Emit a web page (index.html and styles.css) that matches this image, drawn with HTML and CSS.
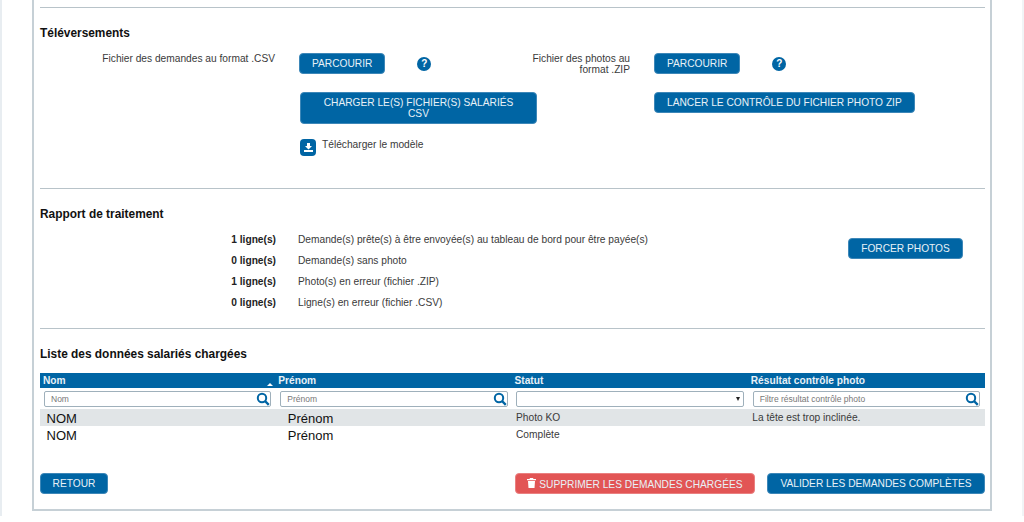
FILE: index.html
```html
<!doctype html>
<html lang="fr">
  <head>
    <meta charset="UTF-8" />
    <meta name="viewport" content="width=device-width, initial-scale=1.0" />
    <title>Téléversements</title>
    <link rel="stylesheet" href="styles.css">
  </head>
  <body>
    <div class="page">
      <div class="card">
        <hr class="sep" />

        <h2 class="upload-title">Téléversements</h2>
        <div class="upload">
          <div class="label">Fichier des demandes au format .CSV</div>
          <div class="browse">
            <button class="btn">Parcourir</button>
            <span class="help">?</span>
          </div>
          <div class="label">Fichier des photos au format .ZIP</div>
          <div class="browse">
            <button class="btn">Parcourir</button>
            <span class="help">?</span>
          </div>

          <div></div>
          <div><button class="btn wide">Charger le(s) fichier(s) salariés CSV</button></div>
          <div></div>
          <div><button class="btn">Lancer le contrôle du fichier photo ZIP</button></div>

          <div></div>
          <div class="model">
            <span class="model-icon">
              <svg width="11" height="11" viewBox="0 0 11 11"><path d="M4 1h3v3h2L5.5 7.5 2 4h2zM1 8h9v2H1z" fill="#fff"/></svg>
            </span>
            <span>Télécharger le modèle</span>
          </div>
        </div>

        <hr class="sep" />

        <h2 class="report-title">Rapport de traitement</h2>
        <div class="report">
          <ul class="report-list">
            <li><b>1 ligne(s)</b><span>Demande(s) prête(s) à être envoyée(s) au tableau de bord pour être payée(s)</span></li>
            <li><b>0 ligne(s)</b><span>Demande(s) sans photo</span></li>
            <li><b>1 ligne(s)</b><span>Photo(s) en erreur (fichier .ZIP)</span></li>
            <li><b>0 ligne(s)</b><span>Ligne(s) en erreur (fichier .CSV)</span></li>
          </ul>
          <button class="btn force">Forcer photos</button>
        </div>

        <hr class="sep" />

        <h2 class="list-title">Liste des données salariés chargées</h2>
        <table class="grid">
          <thead>
            <tr class="head">
              <th class="sorted">Nom</th>
              <th>Prénom</th>
              <th>Statut</th>
              <th>Résultat contrôle photo</th>
            </tr>
            <tr class="filters">
              <td><div class="filter"><span>Nom</span><svg class="loupe" width="14" height="14" viewBox="0 0 14 14"><circle cx="6" cy="6" r="4.2" fill="none" stroke="#0065a4" stroke-width="2"/><path d="M9 9l3.8 3.8" stroke="#0065a4" stroke-width="2.4"/></svg></div></td>
              <td><div class="filter"><span>Prénom</span><svg class="loupe" width="14" height="14" viewBox="0 0 14 14"><circle cx="6" cy="6" r="4.2" fill="none" stroke="#0065a4" stroke-width="2"/><path d="M9 9l3.8 3.8" stroke="#0065a4" stroke-width="2.4"/></svg></div></td>
              <td class="status-filter"><div class="filter select"><i class="caret"></i></div></td>
              <td><div class="filter"><span>Filtre résultat contrôle photo</span><svg class="loupe" width="14" height="14" viewBox="0 0 14 14"><circle cx="6" cy="6" r="4.2" fill="none" stroke="#0065a4" stroke-width="2"/><path d="M9 9l3.8 3.8" stroke="#0065a4" stroke-width="2.4"/></svg></div></td>
            </tr>
          </thead>
          <tbody>
            <tr class="odd">
              <td class="big">NOM</td>
              <td class="big">Prénom</td>
              <td>Photo KO</td>
              <td>La tête est trop inclinée.</td>
            </tr>
            <tr>
              <td class="big">NOM</td>
              <td class="big">Prénom</td>
              <td>Complète</td>
              <td></td>
            </tr>
          </tbody>
        </table>

        <div class="actions">
          <button class="btn back">Retour</button>
          <div class="actions-right">
            <button class="btn danger">
              <svg width="9" height="10" viewBox="0 0 9 10"><path d="M3 0h3l.5 1H9v1.2H0V1h2.5zM1 3h7l-.5 7h-6z" fill="#fff"/></svg>
              Supprimer les demandes chargées
            </button>
            <button class="btn">Valider les demandes complètes</button>
          </div>
        </div>
      </div>
    </div>
  </body>
</html>
```

FILE: styles.css
```css
body {
  margin: 0;
  background: #fff;
  font-family: "Liberation Sans", Arial, sans-serif;
  font-size: 10.2px;
  color: #3a3a3a;
}

.page {
  height: 516px;
  padding-left: 30px;
  padding-right: 30px;
  border-left: 2px solid #e8edf1;
  border-right: 2px solid #f1f4f6;
  box-sizing: border-box;
}

.card {
  width: 960px;
  height: 511px;
  box-sizing: border-box;
  padding: 7px 5px 0 6px;
  border: 2px solid #c6d0d6;
  border-top: 0;
}

.sep {
  margin: 0;
  border: 0;
  border-top: 1px solid #b8c3c9;
}

h2 {
  margin: 0;
  font-size: 11.9px;
  line-height: 14px;
  color: #111;
}

.upload-title {
  margin-top: 18px;
}

.report-title,
.list-title {
  margin-top: 18px;
}

/* --- upload --- */
.upload {
  display: grid;
  grid-template-columns: 235px 197px 110px 1fr;
  grid-template-rows: 39px 47px auto;
  column-gap: 24px;
  height: 135px;
  margin-top: 13px;
}

.label {
  text-align: right;
  line-height: 11px;
}

.browse {
  display: flex;
  align-items: flex-start;
  gap: 32px;
}

.help {
  width: 14px;
  height: 14px;
  margin-top: 4px;
  border-radius: 50%;
  background: #0065a4;
  color: #fff;
  font-size: 10px;
  font-weight: bold;
  line-height: 14px;
  text-align: center;
}

.btn {
  height: 21px;
  padding: 0 12px;
  border: 1px solid #3d87b8;
  border-radius: 4px;
  background: #0065a4;
  color: #e8f1f7;
  font-family: inherit;
  font-size: 10.2px;
  line-height: 11px;
  text-transform: uppercase;
}

.wide {
  width: 237px;
  height: 32px;
  margin-left: 1px;
}

.back {
  width: 68px;
  padding: 0;
}

.danger {
  background: #e25555;
  border-color: #ea8080;
}

.model {
  display: flex;
  align-items: flex-start;
  gap: 6px;
  margin-left: 1px;
  line-height: 12px;
}

.model-icon {
  display: flex;
  align-items: center;
  justify-content: center;
  width: 16px;
  height: 17px;
  border-radius: 4px;
  background: #0065a4;
}

/* --- report --- */
.report {
  display: flex;
  align-items: flex-start;
  height: 99px;
  margin-top: 8px;
}

.report-list {
  width: 808px;
  margin: 0;
  padding: 0;
  list-style: none;
}

.report-list li {
  display: flex;
  align-items: center;
  height: 21px;
}

.report-list b {
  width: 236px;
  margin-right: 22px;
  text-align: right;
  color: #222;
}

.force {
  width: 115px;
  margin-top: 9px;
  padding: 0;
}

/* --- table --- */
.grid {
  width: 945px;
  margin-top: 12px;
  border-collapse: collapse;
  table-layout: fixed;
}

.head th {
  height: 15px;
  padding: 0 0 0 2px;
  background: #0065a4;
  color: #e8f1f7;
  font-size: 10.2px;
  text-align: left;
}

.head th.sorted {
  position: relative;
  padding-left: 3px;
}

.sorted::after {
  content: "";
  position: absolute;
  right: 3px;
  bottom: 2px;
  border: 3.5px solid transparent;
  border-top: 0;
  border-bottom-color: #fff;
}

.filters td {
  height: 21px;
  padding: 0 5px 0 4px;
}

.filters td.status-filter {
  padding-left: 3px;
}

.filter {
  display: flex;
  align-items: center;
  justify-content: space-between;
  height: 16px;
  box-sizing: border-box;
  padding: 0 0 0 6px;
  border: 1px solid #9fb0bb;
  border-radius: 2px;
  font-size: 8.5px;
  color: #777;
}

.select {
  justify-content: flex-end;
  padding-right: 3px;
}

.caret {
  border: 2.5px solid transparent;
  border-bottom: 0;
  border-top: 4px solid #222;
}

.loupe {
  flex: none;
}

.grid tbody td {
  height: 17px;
  padding: 0 0 1px 3.5px;
  box-sizing: border-box;
}

.grid tbody td.big {
  padding: 2px 0 0 6.5px;
  font-size: 13px;
  color: #111;
}

.grid tbody td.big + td.big {
  padding-left: 11.5px;
}

.odd td {
  background: #e1e5e7;
}

.actions {
  display: flex;
  justify-content: space-between;
  margin-top: 30px;
}

.actions-right {
  display: flex;
  gap: 12px;
}

.actions-right .btn {
  width: 218px;
  padding: 0;
}

.actions-right .danger {
  width: 240px;
}
```
